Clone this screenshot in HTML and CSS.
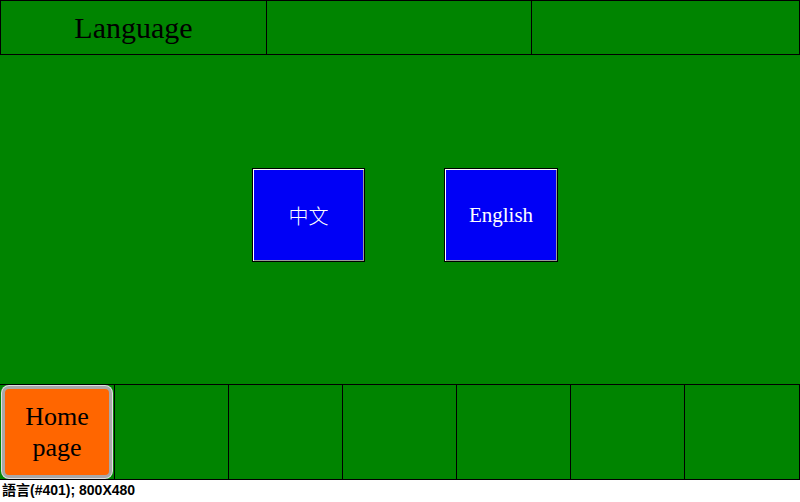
FILE: index.html
```html
<!DOCTYPE html>
<html lang="zh-TW">
<head>
    <meta charset="UTF-8">
    <meta name="viewport" content="width=device-width, initial-scale=1.0">
    <title>語言</title>
    <link rel="stylesheet" href="styles.css">
</head>
<body>
    <div class="screen">
        <div class="top-bar">
            <div class="top-cell title">Language</div>
            <div class="top-cell"></div>
            <div class="top-cell"></div>
        </div>

        <div class="main">
            <button class="lang-btn cn">中文</button>
            <button class="lang-btn en">English</button>
        </div>

        <div class="bottom-bar">
            <div class="bottom-cell">
                <button class="home-btn">Home<br>page</button>
            </div>
            <div class="bottom-cell"></div>
            <div class="bottom-cell"></div>
            <div class="bottom-cell"></div>
            <div class="bottom-cell"></div>
            <div class="bottom-cell"></div>
            <div class="bottom-cell"></div>
        </div>
    </div>
    <div class="caption">語言(#401); 800X480</div>
</body>
</html>
```

FILE: styles.css
```css
body {
    margin: 0;
    background: #fff;
    font-family: 'Liberation Serif', serif;
}
.screen {
    width: 800px;
    height: 480px;
    background: #008400;
    display: flex;
    flex-direction: column;
    box-sizing: border-box;
}
.top-bar {
    display: grid;
    grid-template-columns: 265px 265px 1fr;
    height: 55px;
    box-sizing: border-box;
    border: 1px solid #000;
}
.top-cell {
    border-left: 1px solid #000;
    display: flex;
    align-items: center;
    justify-content: center;
}
.top-cell:first-child { border-left: none; }
.title {
    font-size: 30px;
    color: #000;
    padding-top: 1px;
}
.main {
    flex: 1;
    display: flex;
    align-items: flex-start;
    padding: 113px 0 0 252px;
    gap: 79px;
}
.lang-btn {
    width: 113px;
    height: 94px;
    box-sizing: border-box;
    background: #0000f6;
    color: #fff;
    border: 1px solid #000;
    box-shadow: inset 1px 1px 0 #fff, inset -1px -1px 0 #9a9a9a;
    font-family: 'Liberation Serif', serif;
    font-size: 21px;
    padding: 0;
}
.lang-btn.en { width: 114px; }
.lang-btn.cn {
    font-family: 'Noto Sans CJK SC', 'Noto Sans CJK TC', sans-serif;
    font-weight: 300;
    font-size: 20px;
}
.bottom-bar {
    display: grid;
    grid-template-columns: repeat(6, 114px) 1fr;
    height: 96px;
    box-sizing: border-box;
    border: 1px solid #000;
    border-left: none;
}
.bottom-cell {
    border-left: 1px solid #000;
}
.bottom-cell:first-child {
    border-left: none;
    padding: 1px 2px 1px 2px;
}
.home-btn {
    width: 100%;
    height: 100%;
    box-sizing: border-box;
    background: #ff6600;
    border: 3px solid #a8a8a8;
    border-radius: 7px;
    box-shadow: 0 0 0 1px #e0e0e0;
    font-family: 'Liberation Serif', serif;
    font-size: 26px;
    line-height: 31px;
    color: #000;
    padding: 0;
}
.caption {
    font-family: 'Liberation Sans', 'Noto Sans CJK TC', sans-serif;
    font-weight: bold;
    font-size: 14px;
    line-height: 20px;
    padding-left: 2px;
    color: #000;
}
```
